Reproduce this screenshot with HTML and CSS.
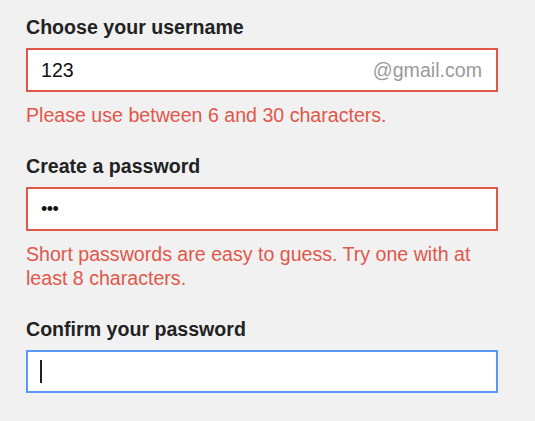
FILE: index.html
```html
<!DOCTYPE html>
<html>
<head>
<meta charset="utf-8">
<link rel="stylesheet" href="styles.css">
</head>
<body>
<form class="form">
  <div class="field">
    <div class="label">Choose your username</div>
    <div class="box box-error">
      <span class="value">123</span>
      <span class="suffix">@gmail.com</span>
    </div>
    <div class="error">Please use between 6 and 30 characters.</div>
  </div>
  <div class="field">
    <div class="label">Create a password</div>
    <div class="box box-error">
      <span class="dots">&bull;&bull;&bull;</span>
    </div>
    <div class="error">Short passwords are easy to guess. Try one with at least 8 characters.</div>
  </div>
  <div class="field">
    <div class="label">Confirm your password</div>
    <div class="box box-focus">
      <span class="caret"></span>
    </div>
  </div>
</form>
</body>
</html>
```

FILE: styles.css
```css
html, body {
  margin: 0;
  padding: 0;
  background: #f1f1f1;
}
body {
  font-family: "Liberation Sans", Arial, sans-serif;
  font-size: 19.6px;
  color: #222;
}
.form {
  padding: 16px 0 0 26px;
  width: 472px;
}
.field {
  display: flex;
  flex-direction: column;
  margin-bottom: 28px;
}
.label {
  font-weight: bold;
  line-height: 22px;
  margin-bottom: 10px;
}
.box {
  box-sizing: border-box;
  height: 44px;
  background: #fff;
  border: 2px solid #e0574a;
  display: flex;
  align-items: center;
  padding: 0 14px 0 13px;
}
.box-focus {
  border-color: #5a97fb;
  height: 43px;
}
.value {
  color: #111;
}
.suffix {
  margin-left: auto;
  color: #9a9a9a;
}
.dots {
  font-size: 18px;
  color: #111;
  letter-spacing: -0.5px;
}
.caret {
  display: block;
  width: 2px;
  height: 23px;
  background: #222;
  margin-left: -1px;
}
.error {
  color: #e0574a;
  line-height: 24px;
  margin-top: 11px;
}
```
